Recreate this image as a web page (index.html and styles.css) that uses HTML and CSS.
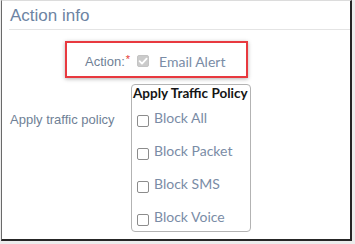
FILE: index.html
```html
<!DOCTYPE html>
<html lang="en">
<head>
<meta charset="utf-8">
<title>Action info</title>
<link rel="stylesheet" href="styles.css">
</head>
<body>
<div class="frame">
  <h2 class="section-title">Action info</h2>
  <div class="highlight">
    <span class="field-label">Action:<span class="req">*</span></span>
    <span class="cb cb-disabled">
      <svg viewBox="0 0 12 12" width="12" height="12"><path d="M2.6 6.2 L5 8.6 L9.6 3.6" fill="none" stroke="#ffffff" stroke-width="1.8" stroke-linecap="round" stroke-linejoin="round"/></svg>
    </span>
    <span class="opt-text">Email Alert</span>
  </div>
  <div class="policy-row">
    <span class="row-label">Apply traffic policy</span>
    <div class="policy-box">
      <div class="policy-title">Apply Traffic Policy</div>
      <ul class="policy-list">
        <li class="policy-item"><span class="cb"></span><span class="opt-text">Block All</span></li>
        <li class="policy-item"><span class="cb"></span><span class="opt-text">Block Packet</span></li>
        <li class="policy-item"><span class="cb"></span><span class="opt-text">Block SMS</span></li>
        <li class="policy-item"><span class="cb"></span><span class="opt-text">Block Voice</span></li>
      </ul>
    </div>
  </div>
</div>
</body>
</html>
```

FILE: styles.css
```css
html, body {
  margin: 0;
  padding: 0;
}
body {
  background: #ececec;
  width: 355px;
  height: 244px;
  overflow: hidden;
}
.frame {
  box-sizing: border-box;
  margin-left: 1px;
  width: 351px;
  height: 241px;
  background: #ffffff;
  border-top: 1px solid #dcdcdc;
  border-left: 1px solid #6a6a6a;
  border-right: 2px solid #262626;
  border-bottom: 2px solid #262626;
  font-family: "Liberation Sans", Arial, sans-serif;
  overflow: hidden;
}
.section-title {
  margin: 0 0 0 7px;
  padding: 5px 0 3px 1px;
  font-size: 17px;
  line-height: 20px;
  font-weight: normal;
  color: #6d84a3;
  border-bottom: 1px solid #e4e4e4;
}
.highlight {
  box-sizing: border-box;
  margin: 11px 0 0 63px;
  width: 183px;
  height: 37px;
  border: 2px solid #e8393f;
  box-shadow: 0 1px 4px rgba(0, 0, 0, 0.3);
  display: flex;
  align-items: center;
  padding: 3px 0 0 18px;
}
.field-label {
  font-size: 13px;
  line-height: 15px;
  color: #6f7f96;
  margin-right: 7px;
}
.req {
  color: #e53935;
  font-size: 11px;
  vertical-align: top;
  position: relative;
  top: -2px;
  margin-left: 1px;
}
.cb {
  box-sizing: border-box;
  flex: none;
  width: 12px;
  height: 12px;
  border: 1px solid #8c8c8c;
  border-radius: 2px;
  background: #ffffff;
  display: inline-flex;
}
.cb-disabled {
  background: #cbcbcb;
  border-color: #c4c4c4;
  margin-right: 10px;
}
.cb-disabled svg {
  display: block;
  margin: -1px;
}
.opt-text {
  font-family: Lato, "Liberation Sans", sans-serif;
  font-size: 14px;
  line-height: 17px;
  color: #7a8ca6;
}
.policy-row {
  display: flex;
  align-items: flex-start;
  margin-top: 6px;
}
.row-label {
  box-sizing: border-box;
  width: 129px;
  padding-left: 8px;
  margin-top: 28px;
  font-size: 13px;
  line-height: 15px;
  color: #6f7f96;
  flex: none;
}
.policy-box {
  box-sizing: border-box;
  width: 120px;
  height: 148px;
  border: 1px solid #b3b3b3;
  border-radius: 4px;
  padding: 0 0 0 1px;
}
.policy-title {
  font-family: Lato, "Liberation Sans", sans-serif;
  font-weight: bold;
  font-size: 13.5px;
  line-height: 16px;
  color: #151515;
  white-space: nowrap;
}
.policy-list {
  list-style: none;
  margin: 8px 0 0 0;
  padding: 0 0 0 4px;
  display: flex;
  flex-direction: column;
  gap: 15px;
}
.policy-item {
  display: flex;
  align-items: flex-start;
  gap: 5px;
}
.policy-item .cb {
  margin-top: 6px;
}
```
